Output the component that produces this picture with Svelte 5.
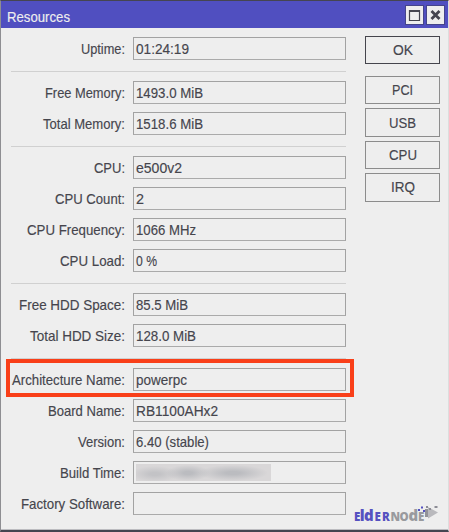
<script>
  const groups = [
    [{ label: 'Uptime:', value: '01:24:19', lw: 44, vw: 53 }],
    [
      { label: 'Free Memory:', value: '1493.0 MiB', lw: 80, vw: 67 },
      { label: 'Total Memory:', value: '1518.6 MiB', lw: 82, vw: 67 },
    ],
    [
      { label: 'CPU:', value: 'e500v2', lw: 31, vw: 46 },
      { label: 'CPU Count:', value: '2', lw: 70, vw: 8 },
      { label: 'CPU Frequency:', value: '1066 MHz', lw: 98, vw: 60 },
      { label: 'CPU Load:', value: '0 %', lw: 65, vw: 21 },
    ],
    [
      { label: 'Free HDD Space:', value: '85.5 MiB', lw: 106, vw: 52 },
      { label: 'Total HDD Size:', value: '128.0 MiB', lw: 95, vw: 60 },
    ],
    [
      { label: 'Architecture Name:', value: 'powerpc', lw: 113, vw: 51, marked: true },
      { label: 'Board Name:', value: 'RB1100AHx2', lw: 77, vw: 82 },
      { label: 'Version:', value: '6.40 (stable)', lw: 47, vw: 73 },
      { label: 'Build Time:', value: '', lw: 65, redacted: true },
      { label: 'Factory Software:', value: '', lw: 104 },
    ],
  ];
  const buttons = [
    { name: 'OK', w: 20 },
    { name: 'PCI', w: 21 },
    { name: 'USB', w: 27 },
    { name: 'CPU', w: 28 },
    { name: 'IRQ', w: 24 },
  ];
</script>

{#snippet label(text, w)}
  <svg class="text" width={w} height="20"><text x="0" y="15" textLength={w} lengthAdjust="spacingAndGlyphs">{text}</text></svg>
{/snippet}

<div class="window">
  <header>
    <span class="title">{@render label('Resources', 63)}</span>
    <div class="controls">
      <button aria-label="Maximize"><svg width="17" height="18"><path d="M3.5 4.5h10v10h-10z" fill="none" stroke="#45454f" stroke-width="1.2"/><path d="M3 5h11" stroke="#45454f" stroke-width="2"/></svg></button>
      <button aria-label="Close"><svg width="17" height="18"><path d="M4.5 5l8 8M12.500 5l-8 8" stroke="#45454f" stroke-width="2.8"/></svg></button>
    </div>
  </header>
  <main>
    <div class="fields">
      {#each groups as rows}
        <section>
          {#each rows as row}
            <div class="row" class:marked={row.marked}>
              <span class="label">{@render label(row.label, row.lw)}</span>
              <div class="value">
                {#if row.value}{@render label(row.value, row.vw)}{/if}
                {#if row.redacted}<i class="redacted"></i>{/if}
              </div>
            </div>
          {/each}
        </section>
      {/each}
    </div>
    <nav>
      {#each buttons as b}
        <button>{@render label(b.name, b.w)}</button>
      {/each}
    </nav>
  </main>
  <div class="logo">
    <svg width="86" height="20" viewBox="0 0 86 20">
      <text class="brand" y="16.500" fill="#5551c0"><tspan x="0">E</tspan><tspan x="5.8" class="tall">l</tspan><tspan x="10" class="tall">d</tspan><tspan x="20.500">E</tspan><tspan x="28">R</tspan><tspan fill="#999a9e"><tspan x="36.500">N</tspan><tspan x="45.500">O</tspan><tspan x="54.500" class="tall">d</tspan><tspan x="64">E</tspan></tspan></text>
      <path d="M74 3l10 5.500-10 6z" fill="#b9b9bd"/>
      <path d="M71 5h3v8h-3z" fill="#929298"/>
      <path d="M64 5h2v2h-2zM67 2.500h2v2h-2zM69 6h2v2h-2z" fill="#5551c0"/>
      <path d="M72 2h2v2h-2zM75 4h2v2h-2zM80.500 2h3v2h-3z" fill="#8d8d96"/>
    </svg>
  </div>
</div>

<style>
  :global(body) { margin: 0; }
  * { box-sizing: border-box; }
  .window {
    position: relative; width: 449px; height: 532px; overflow: hidden;
    background: #eee; border: 1px solid #8e8e92; border-top-color: #454551;
    border-right-color: #ddd; border-bottom: 2px solid #454551;
    box-shadow: inset 0 -1px #bcbcc0;
    font-family: "Liberation Sans", Arial, sans-serif; font-size: 14.5px; color: #45454d;
  }
  header {
    height: 27px; background: #504fc0; display: flex; justify-content: space-between;
    padding: 5px 4px 0 6px;
  }
  .title { color: #eee; margin-top: 1px; }
  .text { display: block; overflow: visible; flex: none; }
  .text text { fill: currentColor; stroke: currentColor; stroke-width: .15px; }
  .controls { display: flex; gap: 4px; }
  .controls button { width: 17px; height: 18px; border: 0; padding: 0; background: #eee; outline: 1px solid #45458a; }
  .controls svg { display: block; }
  main { display: flex; justify-content: space-between; }
  .fields { padding: 9px 0 0 10px; width: 346px; }
  section + section { border-top: 1px solid #d0d0d0; margin-top: 11px; padding-top: 9px; }
  section { width: 335px; display: flex; flex-direction: column; gap: 8px; }
  .row { display: flex; height: 23px; position: relative; }
  .label { width: 114px; display: flex; justify-content: flex-end; padding-top: 2px; }
  .value {
    margin-left: 8px; width: 213px; height: 22.500px; border: 1px solid #a2a2a2;
    border-bottom-color: #aaa; padding: 1px 0 0 2px;
  }
  .marked::after {
    content: ""; position: absolute; box-sizing: border-box; left: -5px; top: -9px;
    width: 348px; height: 38px; border: 4px solid #f93f19;
  }
  .redacted {
    display: block; width: 135px; height: 17px; margin-top: 1px;
    background:
      radial-gradient(ellipse 35px 8px at 97px 9px, #bbbcc0 20%, transparent),
      radial-gradient(ellipse 22px 8px at 52px 9px, #bbbcc0 20%, transparent),
      radial-gradient(ellipse 24px 8px at 19px 10px, #c3c3c6 20%, transparent), #d9d7d8;
  }
  nav { display: flex; flex-direction: column; gap: 4px; padding: 8px 8px 0 0; }
  nav button {
    width: 75px; height: 28.400px; border: 1px solid #8c8c8c; background: #eee; color: #45454d;
    padding: 0; display: flex; align-items: center; justify-content: center;
    font: inherit;
  }
  nav button:first-child { border-color: #45454d; margin-bottom: 7.600px; }
  .logo { position: absolute; left: 353px; top: 503px; }
  .brand { font-family: "Open Sans", sans-serif; font-weight: 800; font-size: 11.5px; }
  .tall { font-size: 15px; }
</style>
